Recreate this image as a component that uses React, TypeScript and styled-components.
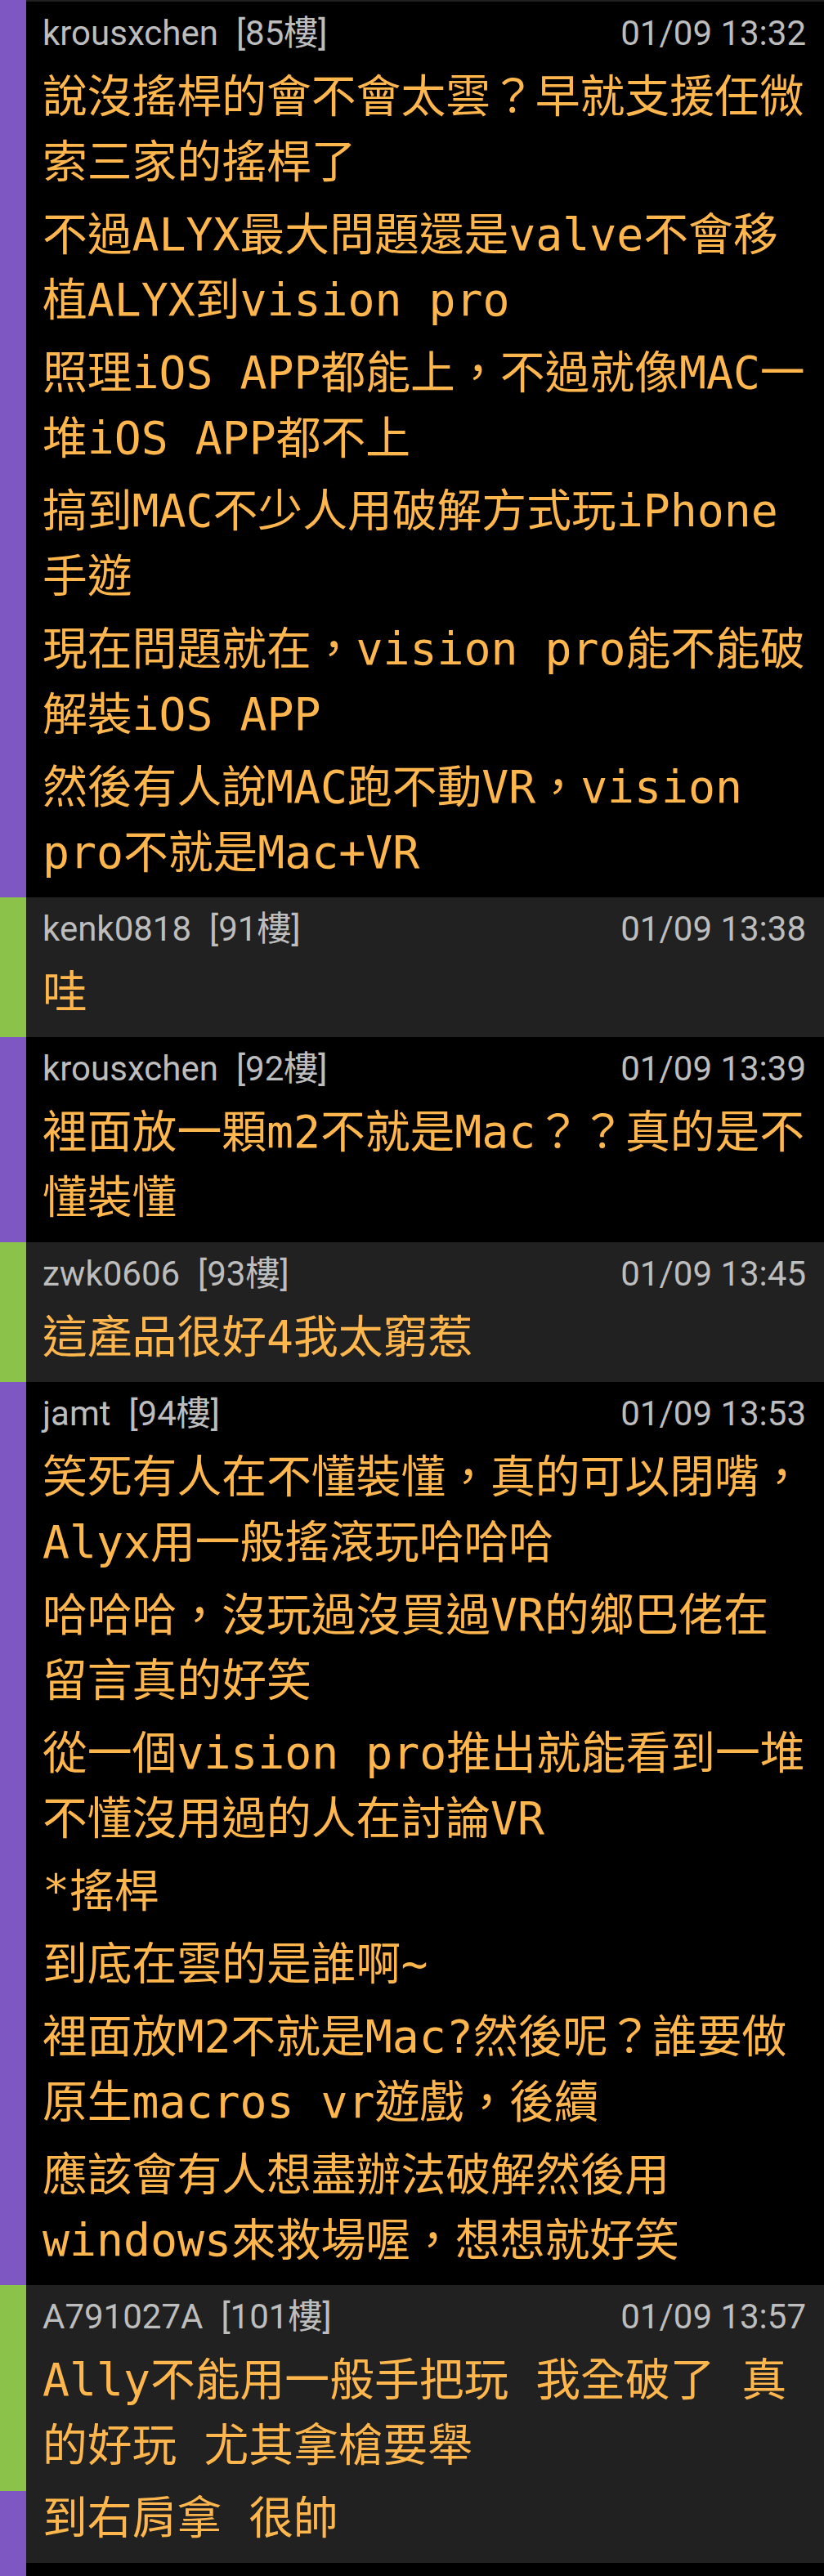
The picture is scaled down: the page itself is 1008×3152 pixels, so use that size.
import React from "react";
import styled, { createGlobalStyle } from "styled-components";

const PURPLE = "#7e57c2";
const GREEN = "#8bc34a";
const GRAY_BG = "#212121";
const BLACK_BG = "#000000";

const GlobalStyle = createGlobalStyle`
  html, body {
    margin: 0;
    padding: 0;
    background: #000;
  }
  body {
    width: 1008px;
    overflow-x: hidden;
  }
`;

const List = styled.main`
  display: flex;
  flex-direction: column;
  width: 1008px;
  background: ${BLACK_BG};
`;

const Item = styled.article<{ $bg: string }>`
  display: grid;
  grid-template-columns: 32px 1fr;
  background: ${(p) => p.$bg};
`;

const Edge = styled.div<{ $bg: string; $h: number }>`
  display: grid;
  grid-template-columns: 32px 1fr;
  height: ${(p) => p.$h}px;
  background: ${(p) => p.$bg};
`;

const Bar = styled.div`
  display: flex;
  flex-direction: column;
  background: ${PURPLE};
`;

const Accent = styled.div<{ $color: string; $h?: number }>`
  background: ${(p) => p.$color};
  ${(p) => (p.$h ? `height: ${p.$h}px; flex: none;` : `flex: 1;`)}
`;

const Body = styled.div`
  padding: 15px 22px 15px 20px;
  min-width: 0;
`;

const Header = styled.header`
  display: flex;
  justify-content: space-between;
  align-items: baseline;
  height: 48px;
  line-height: 48px;
  margin-bottom: 13px;
  font-family: Roboto, "Noto Sans CJK TC", sans-serif;
  font-size: 42px;
  color: #bdbdbd;
  white-space: nowrap;
`;

const Author = styled.span`
  display: flex;
  gap: 22px;
`;

const Floor = styled.span``;

const Time = styled.span``;

const Para = styled.div`
  & + & {
    margin-top: 9px;
  }
`;

const Line = styled.div`
  font-family: "DejaVu Sans Mono", "Noto Sans CJK TC", monospace;
  font-size: 54.8px;
  line-height: 80px;
  height: 80px;
  color: #ffb74d;
  white-space: pre;
`;

type Comment = {
  user: string;
  floor: number;
  time: string;
  color: string;
  bg: string;
  accentHeight?: number;
  paras: string[][];
};

const comments: Comment[] = [
  {
    user: "krousxchen",
    floor: 85,
    time: "01/09 13:32",
    color: PURPLE,
    bg: BLACK_BG,
    paras: [
      ["說沒搖桿的會不會太雲？早就支援任微", "索三家的搖桿了"],
      ["不過ALYX最大問題還是valve不會移", "植ALYX到vision pro"],
      ["照理iOS APP都能上，不過就像MAC一", "堆iOS APP都不上"],
      ["搞到MAC不少人用破解方式玩iPhone", "手遊"],
      ["現在問題就在，vision pro能不能破", "解裝iOS APP"],
      ["然後有人說MAC跑不動VR，vision", "pro不就是Mac+VR"],
    ],
  },
  {
    user: "kenk0818",
    floor: 91,
    time: "01/09 13:38",
    color: GREEN,
    bg: GRAY_BG,
    paras: [["哇"]],
  },
  {
    user: "krousxchen",
    floor: 92,
    time: "01/09 13:39",
    color: PURPLE,
    bg: BLACK_BG,
    paras: [["裡面放一顆m2不就是Mac？？真的是不", "懂裝懂"]],
  },
  {
    user: "zwk0606",
    floor: 93,
    time: "01/09 13:45",
    color: GREEN,
    bg: GRAY_BG,
    paras: [["這產品很好4我太窮惹"]],
  },
  {
    user: "jamt",
    floor: 94,
    time: "01/09 13:53",
    color: PURPLE,
    bg: BLACK_BG,
    paras: [
      ["笑死有人在不懂裝懂，真的可以閉嘴，", "Alyx用一般搖滾玩哈哈哈"],
      ["哈哈哈，沒玩過沒買過VR的鄉巴佬在", "留言真的好笑"],
      ["從一個vision pro推出就能看到一堆", "不懂沒用過的人在討論VR"],
      ["*搖桿"],
      ["到底在雲的是誰啊~"],
      ["裡面放M2不就是Mac?然後呢？誰要做", "原生macros vr遊戲，後續"],
      ["應該會有人想盡辦法破解然後用", "windows來救場喔，想想就好笑"],
    ],
  },
  {
    user: "A791027A",
    floor: 101,
    time: "01/09 13:57",
    color: GREEN,
    bg: GRAY_BG,
    accentHeight: 252,
    paras: [
      ["Ally不能用一般手把玩 我全破了 真", "的好玩 尤其拿槍要舉"],
      ["到右肩拿 很帥"],
    ],
  },
];

export default function App() {
  return (
    <>
      <GlobalStyle />
      <List>
        <Edge $bg={GRAY_BG} $h={2}>
          <Bar />
          <div />
        </Edge>
        {comments.map((c, i) => (
          <Item key={i} $bg={c.bg}>
            <Bar>
              <Accent $color={c.color} $h={c.accentHeight} />
            </Bar>
            <Body>
              <Header>
                <Author>
                  <span>{c.user}</span>
                  <Floor>[{c.floor}樓]</Floor>
                </Author>
                <Time>{c.time}</Time>
              </Header>
              {c.paras.map((lines, j) => (
                <Para key={j}>
                  {lines.map((l, k) => (
                    <Line key={k}>{l}</Line>
                  ))}
                </Para>
              ))}
            </Body>
          </Item>
        ))}
        <Edge $bg={BLACK_BG} $h={60}>
          <Bar />
          <div />
        </Edge>
      </List>
    </>
  );
}
